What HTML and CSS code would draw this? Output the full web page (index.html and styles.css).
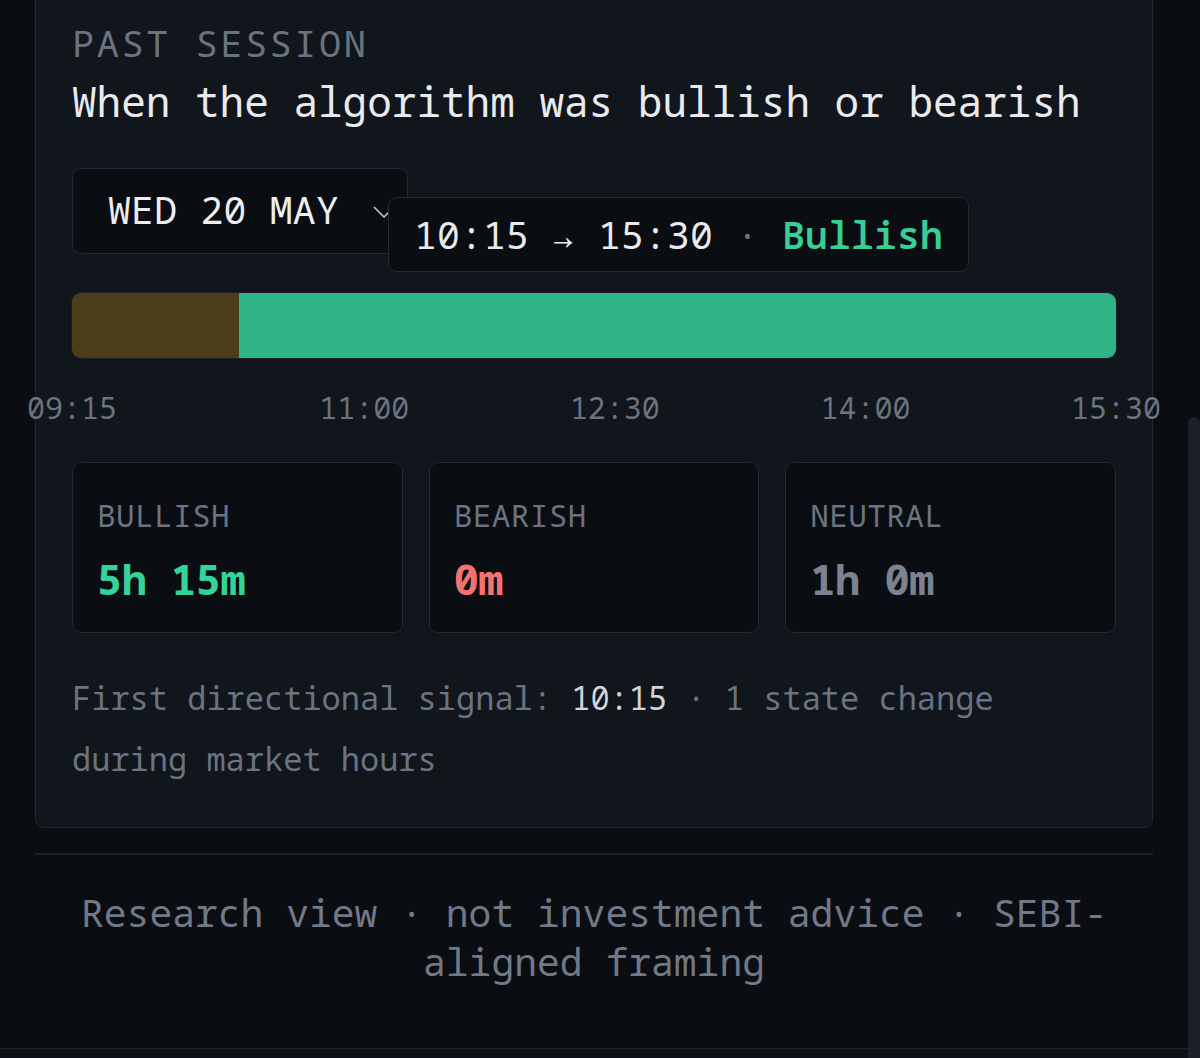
FILE: index.html
```html
<!DOCTYPE html>
<html lang="en">
<head>
    <meta charset="UTF-8">
    <meta name="viewport" content="width=device-width, initial-scale=1.0">
    <title>Past session</title>
    <link rel="stylesheet" href="styles.css">
</head>
<body>
    <div class="page">
        <div class="card">
            <div class="eyebrow">PAST SESSION</div>
            <h2 class="title">When the algorithm was bullish or bearish</h2>

            <div class="date-select">
                <span class="date-text">WED 20 MAY</span>
                <svg class="chevron" width="22" height="12" viewBox="0 0 22 12">
                    <path d="M1 1 L11 11 L21 1" fill="none" stroke="#c9cdd3" stroke-width="1.5"/>
                </svg>
            </div>

            <div class="timeline">
                <div class="bar">
                    <div class="seg neutral" style="width: 16%"></div>
                    <div class="seg bull" style="width: 84%"></div>
                </div>
                <div class="tooltip">10:15 → 15:30 <span class="tt-dot">·</span> <span class="tt-state">Bullish</span></div>
                <div class="ticks">
                    <span class="tick" style="left: 0%">09:15</span>
                    <span class="tick" style="left: 28%">11:00</span>
                    <span class="tick" style="left: 52%">12:30</span>
                    <span class="tick" style="left: 76%">14:00</span>
                    <span class="tick" style="left: 100%">15:30</span>
                </div>
            </div>

            <div class="stats">
                <div class="stat">
                    <div class="stat-label">BULLISH</div>
                    <div class="stat-value green">5h 15m</div>
                </div>
                <div class="stat">
                    <div class="stat-label">BEARISH</div>
                    <div class="stat-value red">0m</div>
                </div>
                <div class="stat">
                    <div class="stat-label">NEUTRAL</div>
                    <div class="stat-value grey">1h 0m</div>
                </div>
            </div>

            <p class="summary"><span>First directional signal:</span> <span class="hl">10:15</span> <span>· 1 state change</span> <span>during market hours</span></p>
        </div>

        <div class="divider"></div>

        <p class="disclaimer">Research view · not investment advice · SEBI-aligned framing</p>

        <div class="bottom-bar"></div>
    </div>
    <div class="scroll-thumb"></div>
</body>
</html>
```

FILE: styles.css
```css
body {
    margin: 0;
    background-color: #0a0d12;
    font-family: "Noto Sans Mono", "DejaVu Sans Mono", monospace;
    color: #e5e7eb;
    overflow: hidden;
}
.page {
    width: 1188px;
    padding: 0 35px;
    box-sizing: border-box;
}
.card {
    margin-top: -10px;
    padding: 30px 36px 38px;
    background-color: #11151c;
    border: 1px solid #232831;
    border-radius: 9px;
}
.eyebrow {
    font-size: 37px;
    line-height: 44px;
    letter-spacing: 2.5px;
    color: #6b7380;
}
.title {
    margin: 11px 0 0;
    font-size: 41px;
    line-height: 50px;
    font-weight: normal;
    color: #e8eaee;
}
.date-select {
    display: flex;
    align-items: center;
    gap: 34px;
    width: 336px;
    height: 86px;
    margin-top: 42px;
    padding: 0 0 0 35px;
    box-sizing: border-box;
    background-color: #0a0d12;
    border: 1px solid #232831;
    border-radius: 9px;
    font-size: 38px;
    line-height: 38px;
    letter-spacing: 0.3px;
    color: #eceef1;
}
.date-text {
    padding-bottom: 5px;
}
.chevron {
    margin-top: 2px;
}
.timeline {
    position: relative;
    margin-top: 39px;
}
.bar {
    display: flex;
    height: 65px;
    border-radius: 9px;
    overflow: hidden;
    box-shadow: 0 0 0 1px #1c2028;
}
.seg.neutral {
    background-color: #4a3e1b;
}
.seg.bull {
    background-color: #2eb486;
}
.tooltip {
    position: absolute;
    left: 316px;
    top: -96px;
    padding: 0 25px;
    background-color: #0a0d12;
    border: 1px solid #232831;
    border-radius: 9px;
    font-size: 38px;
    line-height: 73px;
    letter-spacing: 0.2px;
    white-space: pre;
    color: #e8eaee;
}
.tt-dot {
    color: #6b7380;
}
.tt-state {
    color: #38cf95;
    font-weight: 600;
}
.ticks {
    position: relative;
    height: 36px;
    margin-top: 32px;
}
.tick {
    position: absolute;
    top: 0;
    transform: translateX(-50%);
    font-size: 30px;
    line-height: 36px;
    color: #6b7380;
}
.stats {
    display: grid;
    grid-template-columns: repeat(3, 1fr);
    gap: 26px;
    margin-top: 36px;
}
.stat {
    padding: 32px 24px 28px;
    background-color: #0a0d12;
    border: 1px solid #232831;
    border-radius: 9px;
}
.stat-label {
    font-size: 31px;
    line-height: 40px;
    letter-spacing: 0.4px;
    color: #6b7380;
}
.stat-value {
    margin-top: 19px;
    font-size: 42px;
    line-height: 50px;
    font-weight: bold;
    letter-spacing: -0.5px;
}
.green {
    color: #34d399;
}
.red {
    color: #f47370;
}
.grey {
    color: #7b8391;
}
.summary {
    margin: 34px 0 0;
    font-size: 32px;
    line-height: 61px;
    color: #6b7380;
}
.hl {
    color: #d1d5db;
}
.divider {
    height: 2px;
    margin-top: 25px;
    background-color: #1c2129;
}
.disclaimer {
    margin: 33px 0 0;
    font-size: 38px;
    line-height: 49px;
    text-align: center;
    color: #717987;
}
.bottom-bar {
    height: 20px;
    margin: 62px -35px 0;
    border-top: 1px solid #1e232b;
    background-color: #0d1016;
}
.scroll-thumb {
    position: fixed;
    right: 0;
    top: 417px;
    bottom: 0;
    width: 12px;
    background-color: #1b2129;
    border-radius: 6px 6px 0 0;
}
```
